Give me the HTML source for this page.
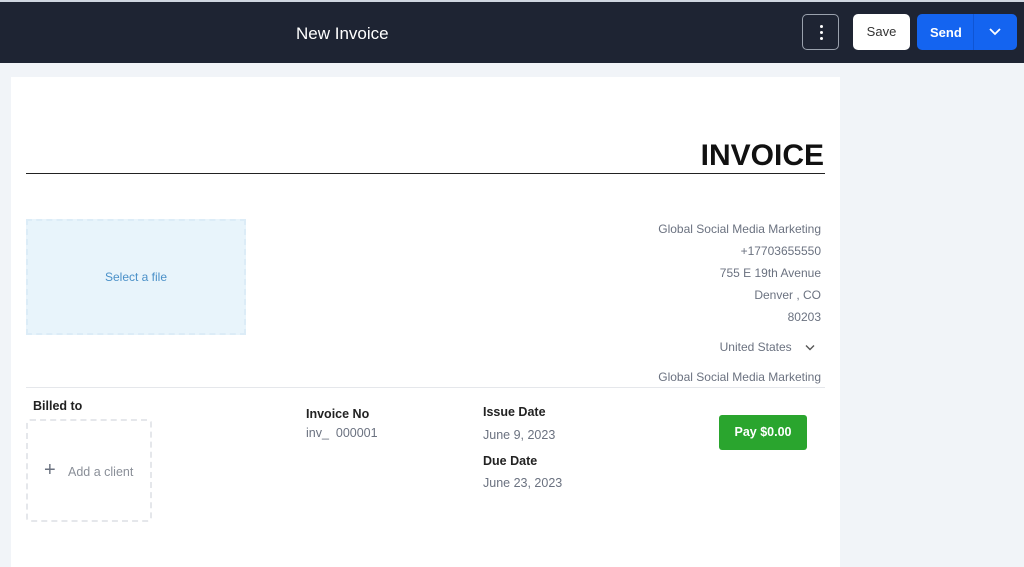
<!DOCTYPE html>
<html><head><meta charset="utf-8"><style>
*{box-sizing:border-box;margin:0;padding:0}
body{width:1024px;height:562px;overflow:hidden;background:#f1f4f8;font-family:"Liberation Sans",sans-serif;position:relative}
.top{position:absolute;left:0;top:0;width:1024px;height:63px;background:#1e2433;border-top:2px solid #cfd6e0}
.title{position:absolute;left:296px;top:22px;color:#fff;font-size:17px}
.dots{position:absolute;left:802px;top:12px;width:37px;height:36px;border:1px solid #9aa1ad;border-radius:5px}
.dots i{position:absolute;left:17px;width:3px;height:3px;background:#fff;border-radius:50%}
.save{position:absolute;left:853px;top:12px;width:57px;height:36px;background:#fff;border-radius:5px;color:#333;font-size:13px;text-align:center;line-height:36px}
.send{position:absolute;left:917px;top:12px;width:100px;height:36px;background:#1464f0;border-radius:5px;color:#fff;font-size:13px;font-weight:bold}
.send span{position:absolute;left:13px;top:11px}
.send b{position:absolute;left:56px;top:0;width:1px;height:36px;background:#0f55d4}
.page{position:absolute;left:11px;top:77px;width:829px;height:490px;background:#fff}
.inv{position:absolute;right:16px;top:62px;font-size:30px;font-weight:bold;color:#111}
.line{position:absolute;left:15px;top:96px;width:799px;height:1px;background:#222}
.drop{position:absolute;left:15px;top:142px;width:220px;height:116px;background:#e8f4fb;border:2px dashed #dcecf7;color:#4a90c8;font-size:12px;text-align:center;line-height:112px}
.addr{position:absolute;right:19px;top:141px;text-align:right;color:#6b7280;font-size:12px;line-height:22px}
.hr{position:absolute;left:15px;top:310px;width:799px;height:1px;background:#e5e7eb}
.lbl{position:absolute;font-size:12.5px;font-weight:bold;color:#222}
.val{position:absolute;font-size:12.5px;color:#6b7280}
.client{position:absolute;left:15px;top:342px;width:126px;height:103px;border:2px dashed #e5e7eb;border-radius:4px;color:#8a8f98;font-size:12.5px}
.pay{position:absolute;left:708px;top:338px;width:88px;height:35px;background:#2aa52e;border-radius:3px;color:#fff;font-size:12.5px;font-weight:bold;text-align:center;line-height:35px}
</style></head><body>
<div class="top">
<div class="title">New Invoice</div>
<div class="dots"><i style="top:10px"></i><i style="top:16px"></i><i style="top:22px"></i></div>
<div class="save">Save</div>
<div class="send"><span>Send</span><b></b><svg style="position:absolute;left:71px;top:13px" width="14" height="10" viewBox="0 0 14 10"><path d="M2 2l5 5 5-5" fill="none" stroke="#fff" stroke-width="1.8"/></svg></div>
</div>
<div class="page">
<div class="inv">INVOICE</div>
<div class="line"></div>
<div class="drop">Select a file</div>
<div class="addr">Global Social Media Marketing<br>+17703655550<br>755 E 19th Avenue<br>Denver , CO<br>80203<div style="margin-top:8px;padding-right:6px">United States <svg style="margin-left:10px" width="10" height="7" viewBox="0 0 10 7"><path d="M1 1.5l4 4 4-4" fill="none" stroke="#555" stroke-width="1.4"/></svg></div><div style="margin-top:8px">Global Social Media Marketing</div></div>
<div class="hr"></div>
<div class="lbl" style="left:22px;top:322px">Billed to</div>
<div class="client"><span style="position:absolute;left:16px;top:38px;font-size:20px;color:#6b7280">+</span><span style="position:absolute;left:40px;top:44px">Add a client</span></div>
<div class="lbl" style="left:295px;top:330px">Invoice No</div>
<div class="val" style="left:295px;top:349px">inv_&nbsp; 000001</div>
<div class="lbl" style="left:472px;top:328px">Issue Date</div>
<div class="val" style="left:472px;top:351px">June 9, 2023</div>
<div class="lbl" style="left:472px;top:377px">Due Date</div>
<div class="val" style="left:472px;top:399px">June 23, 2023</div>
<div class="pay">Pay $0.00</div>
</div>
</body></html>
